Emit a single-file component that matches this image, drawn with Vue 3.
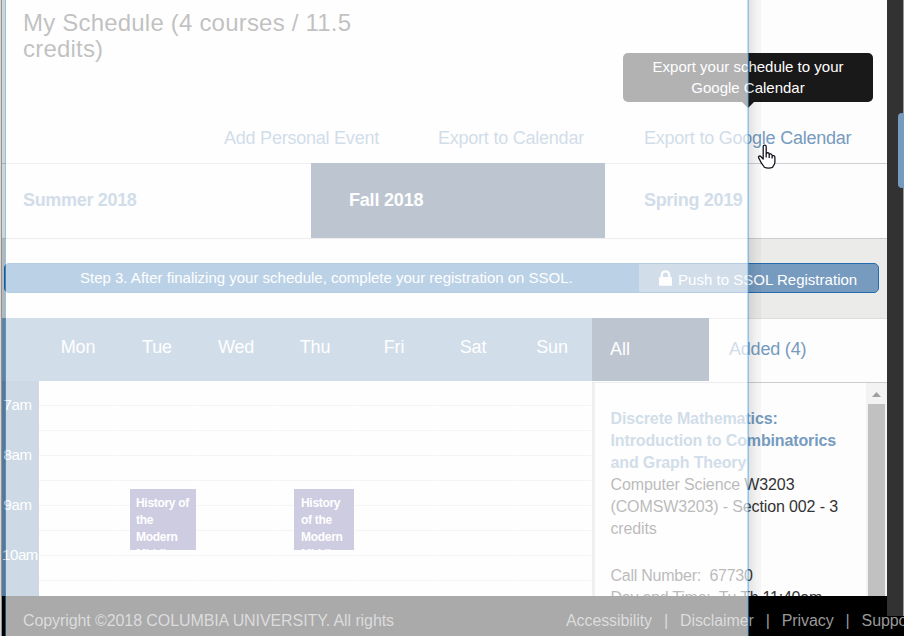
<script setup>
const actions = ['Add Personal Event', 'Export to Calendar', 'Export to Google Calendar']
const terms = ['Summer 2018', 'Fall 2018', 'Spring 2019']
const days = ['Mon', 'Tue', 'Wed', 'Thu', 'Fri', 'Sat', 'Sun']
const hours = ['7am', '8am', '9am', '10am']
const slots = 9
</script>

<template>
  <div class="page">
    <main class="content">
      <header class="head">
        <h1>My Schedule (4 courses / 11.5<br>credits)</h1>
        <nav class="actions">
          <a v-for="(a, i) in actions" :key="a" :class="'act' + i">{{ a }}</a>
        </nav>
      </header>
      <nav class="terms">
        <a v-for="(t, i) in terms" :key="t" :class="{ active: i === 1 }">{{ t }}</a>
      </nav>
      <section class="band">
        <div class="banner">
          <p>Step 3. After finalizing your schedule, complete your registration on SSOL.</p>
          <button>
            <svg width="13" height="16" viewBox="0 0 13 16"><path d="M2.8 8V5a3.7 3.7 0 0 1 7.4 0v3" fill="none" stroke="#fff" stroke-width="2.3" /><rect x="0" y="7" width="13" height="8.7" rx="1" fill="#fff" /></svg>
            <span>Push to SSOL Registration</span>
          </button>
        </div>
      </section>
      <section class="schedule">
        <div class="calendar">
          <div class="days"><span v-for="d in days" :key="d">{{ d }}</span></div>
          <div class="week">
            <div class="hours"><span v-for="h in hours" :key="h">{{ h }}</span></div>
            <div class="grid">
              <div v-for="d in days" :key="d" class="day">
                <i v-for="s in slots" :key="s"></i>
                <div v-if="d === 'Tue'" class="event">History of the Modern Middle</div>
                <div v-if="d === 'Thu'" class="event narrow">History of the Modern Middle</div>
              </div>
            </div>
          </div>
        </div>
        <aside class="side">
          <div class="tabs"><a class="all">All</a><a class="added">Added (4)</a></div>
          <div class="list">
            <div class="course">
              <h2>Discrete Mathematics:<br>Introduction to Combinatorics<br>and Graph Theory</h2>
              <p>Computer Science W3203<br>(COMSW3203) - Section 002 - 3<br>credits</p>
              <p class="call">Call Number:&nbsp; 67730<br>Day and Time:&nbsp; Tu Th 11:40am</p>
            </div>
            <div class="scroll">
              <svg width="9" height="5" viewBox="0 0 9 5"><path d="M0 5 4.5 0 9 5z" fill="#a0a0a0" /></svg>
              <div class="thumb"></div>
            </div>
          </div>
        </aside>
      </section>
    </main>
    <footer>
      <span class="copy">Copyright ©2018 COLUMBIA UNIVERSITY. All rights</span>
      <span class="legal"><a>Accessibility</a><b>|</b><a>Disclaimer</a><b>|</b><a>Privacy</a><b>|</b><a>Support</a></span>
    </footer>
    <div class="tip">Export your schedule to your<br>Google Calendar</div>
    <div class="edge"></div>
    <div class="rail"><div class="handle"></div></div>
    <div class="veil"></div>
    <div class="shade"></div>
    <svg class="cursor" width="20" height="25" viewBox="0 0 20 25"><path d="M6.2 15V2.7c0-2.2 3-2.2 3 0v7.2c.3-1.7 2.9-1.5 3 .3v.8c.4-1.6 2.8-1.3 2.9.5v1c.5-1.5 2.8-1.1 2.8.7v4.8c0 3-1.8 3.6-2.3 5.3-2 1.2-6 1.2-8.2 0-.8-2-2.8-3.2-3.7-5.6l-2-3.8c-.9-1.8 1.3-2.5 2.3-1.2zM9.2 9v4.5M12.2 10v4M15.1 11.5v3" fill="#fff" stroke="#15151f" stroke-width="1.3" stroke-linejoin="round" /></svg>
  </div>
</template>

<style>
body { margin: 0; overflow: hidden; }
</style>
<style scoped>
* { box-sizing: border-box; }
.page { position: relative; width: 904px; height: 636px; overflow: hidden; background: #fdfdfd; font-family: "Liberation Sans", Arial, sans-serif; }
.content { width: 885px; height: 596px; margin-left: 2px; overflow: hidden; }
a { white-space: nowrap; }
.head { height: 164px; border-bottom: 1px solid #d0d0d0; padding: 10px 0 0 21px; display: flex; flex-direction: column; justify-content: space-between; }
h1 { margin: 0; font-size: 24px; font-weight: 400; line-height: 26px; color: #484848; letter-spacing: .2px; }
.actions { display: flex; height: 35px; color: #769bbf; font-size: 18px; line-height: 21px; letter-spacing: -.23px; padding-left: 201px; }
.act0 { width: 214px; }
.act1 { width: 206px; }
.terms { display: flex; height: 75px; border-bottom: 1px solid #ccc; box-shadow: 0 1px 0 #e2e2e2; }
.terms a { flex: none; width: 309px; padding-left: 21px; font-size: 18px; font-weight: 700; line-height: 72px; letter-spacing: -.32px; color: #769bbf; }
.terms a + a { padding-left: 38px; width: 294px; }
.terms .active { color: #fff; background: #3c5276; margin-top: -1px; line-height: 74px; letter-spacing: -.2px; }
.terms .active + a { width: 282px; padding-left: 39px; }
.band { height: 79px; padding: 24px 8px 0 2px; background: linear-gradient(90deg, #dadada 3px, #fdfdfd 3px, #fdfdfd 746px, #ebecea 746px); }
.banner { display: flex; height: 30px; border: 1px solid #246bad; border-radius: 5px; background: #3476b6; color: #fff; overflow: hidden; }
.banner p { width: 634px; margin: 0; padding-left: 75px; font-size: 15px; line-height: 28px; white-space: nowrap; }
button { flex: 1; display: flex; gap: 6px; align-items: center; padding: 2px 0 0 20px; border: 0; background: #769bbf; color: #fff; font: 15px "Liberation Sans", Arial, sans-serif; letter-spacing: .02px; white-space: nowrap; }
button svg { margin-top: -2px; }
.schedule { display: flex; height: 278px; }
.calendar { width: 590px; }
.days { height: 63px; background: #769bbf; padding-left: 36.5px; display: grid; grid-template-columns: repeat(7, 79px); color: #fff; text-align: center; font-size: 18px; line-height: 59px; letter-spacing: -.15px; }
.week { display: flex; height: 215px; }
.hours { width: 37px; background: #6a8fb3; color: #fff; font-size: 15px; letter-spacing: -.4px; padding-top: 13px; display: flex; flex-direction: column; }
.hours span { height: 50px; line-height: 21px; padding-left: 1.5px; white-space: nowrap; }
.hours span:last-child { padding-left: 0; }
.grid { display: grid; grid-template-columns: repeat(7, 79px); }
.day { position: relative; border-right: 1px solid #fdfdfd; }
.day i { display: block; height: 25px; border-bottom: 1px solid #dfdfdf; }
.event { position: absolute; left: 12px; top: 108px; width: 66px; height: 61px; overflow: hidden; padding: 6px 2px 0 6px; background: #6d67a4; color: #fff; font-size: 12px; line-height: 17px; letter-spacing: -.3px; font-weight: 700; }
.event.narrow { left: 18px; width: 60px; padding-left: 7px; padding-right: 6px; }
.side { width: 295px; }
.tabs { display: flex; height: 65px; border-bottom: 1px solid #ccc; border-top: 1px solid #ddd; font-size: 18px; line-height: 60px; color: #769bbf; }
.all { width: 117px; height: 63px; margin-top: -1px; padding-left: 18px; background: #3c5276; color: #fff; line-height: 62px; }
.added { padding-left: 20px; letter-spacing: -.2px; }
.list { display: flex; height: 213px; overflow: hidden; }
.course { width: 274px; border-left: 3px solid #d4d4d4; padding: 25px 0 0 15.5px; color: #333; font-size: 16px; line-height: 22px; letter-spacing: -.13px; white-space: nowrap; }
h2 { margin: 0; font-size: 16px; line-height: 22px; color: #769bbf; }
.course p { margin: 0; }
.course .call { margin-top: 25px; letter-spacing: -.24px; }
.scroll { width: 21px; background: #f3f3f3; display: flex; flex-direction: column; align-items: center; padding-top: 9px; gap: 7px; }
.thumb { width: 17px; flex: 1; background: #c1c1c1; }
footer { height: 40px; margin-left: 2px; background: #000; color: #999; font-size: 16px; padding-left: 21px; display: flex; line-height: 49px; letter-spacing: -.09px; white-space: nowrap; }
.copy { flex: none; width: 543px; }
.legal { display: flex; }
.legal b { font-weight: 400; width: 28px; text-align: center; }
.tip { position: absolute; left: 623px; top: 53px; width: 250px; height: 49px; padding-top: 3px; border-radius: 5px; background: #191919; color: #fff; text-align: center; font-size: 15px; line-height: 21px; }
.tip::after { content: ""; position: absolute; left: 119px; top: 49px; border: 6px solid transparent; border-top-color: #191919; border-bottom: 0; }
.edge { position: absolute; left: 0; top: 0; width: 5px; height: 636px; background: linear-gradient(90deg, #d8d8d8 1px, #909090 1px, #909090 2px, rgba(0,0,0,.14) 2px, rgba(0,0,0,.18) 5px); }
.rail { position: absolute; left: 887px; top: 0; width: 17px; height: 616px; background: #323232; border-right: 1px solid #999; }
.handle { position: absolute; left: 11px; top: 113px; width: 6px; height: 75px; border-radius: 4px 0 0 4px; background: #769bbf; }
.veil { position: absolute; left: 5px; top: 0; width: 744px; height: 636px; background: rgba(253,253,253,.67) padding-box; border: solid rgba(58,145,211,.55); border-width: 0 1px; box-shadow: inset -1px 0 rgba(90,160,215,.35); }
.shade { position: absolute; left: 749px; top: 0; width: 12px; height: 596px; background: linear-gradient(90deg, rgba(0,0,0,.1), rgba(0,0,0,.07) 4px, rgba(0,0,0,.04) 8px, rgba(0,0,0,.03)); }
.cursor { position: absolute; left: 757px; top: 144px; }
</style>
